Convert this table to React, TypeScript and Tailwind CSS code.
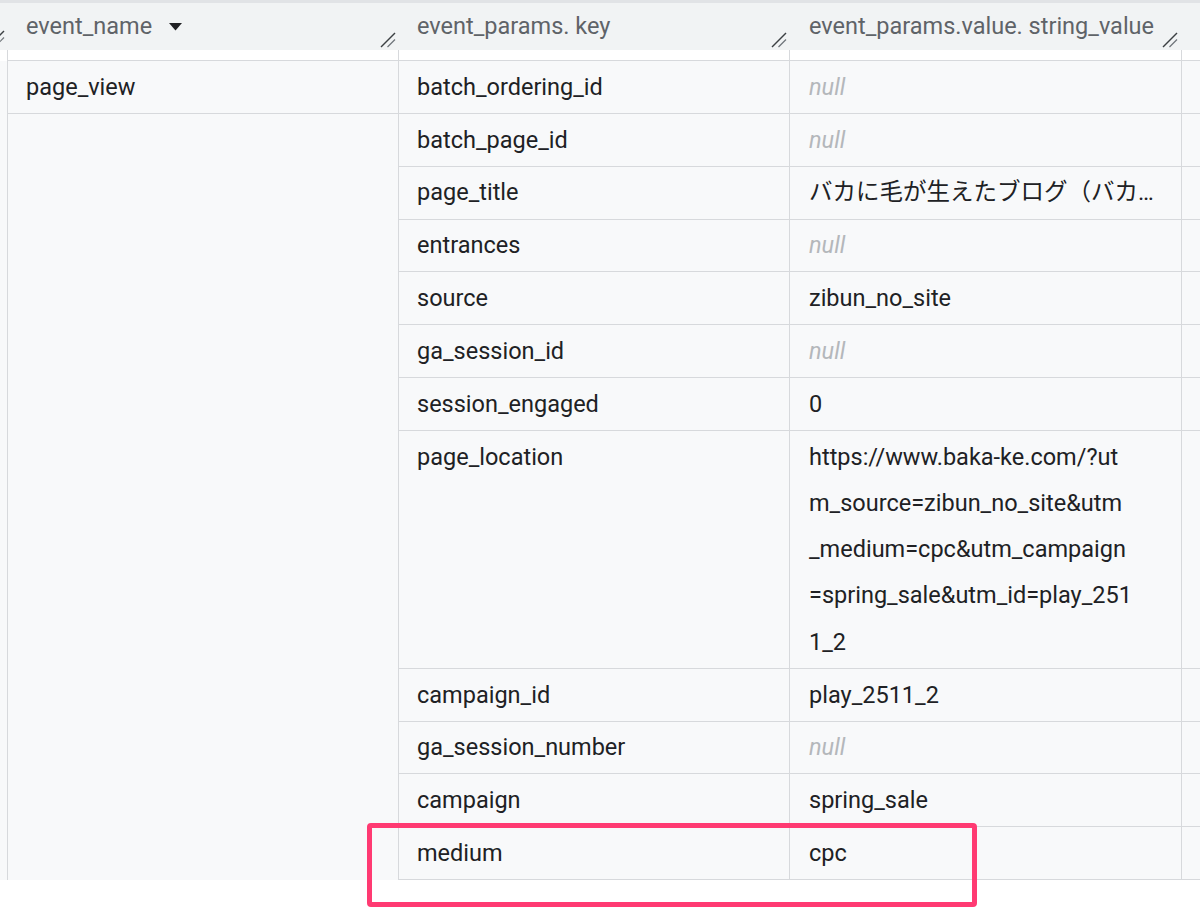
import React from "react";

type Row = { k: string; v?: string | null; lines?: string[]; truncate?: boolean };

const rows: Row[] = [
  { k: "batch_ordering_id", v: null },
  { k: "batch_page_id", v: null },
  { k: "page_title", v: "バカに毛が生えたブログ（バカ毛）", truncate: true },
  { k: "entrances", v: null },
  { k: "source", v: "zibun_no_site" },
  { k: "ga_session_id", v: null },
  { k: "session_engaged", v: "0" },
  {
    k: "page_location",
    lines: [
      "https://www.baka-ke.com/?ut",
      "m_source=zibun_no_site&utm",
      "_medium=cpc&utm_campaign",
      "=spring_sale&utm_id=play_251",
      "1_2",
    ],
  },
  { k: "campaign_id", v: "play_2511_2" },
  { k: "ga_session_number", v: null },
  { k: "campaign", v: "spring_sale" },
  { k: "medium", v: "cpc" },
];

function Grip({ className }: { className?: string }) {
  return (
    <svg className={className} width="16" height="16" viewBox="0 0 16 16" fill="none">
      <line x1="1" y1="15" x2="15" y2="1" stroke="#3c4043" strokeWidth="1.5" />
      <line x1="7.5" y1="15" x2="15" y2="7.5" stroke="#70757a" strokeWidth="1.2" />
    </svg>
  );
}

function Caret() {
  return (
    <svg width="13" height="8" viewBox="0 0 13 8" className="ml-[17px]">
      <path d="M0 0 L13 0 L6.5 7.5 Z" fill="#202124" />
    </svg>
  );
}

export default function App() {
  return (
    <div className="relative w-[1200px] h-[908px] overflow-hidden bg-white text-[#202124] font-[Roboto,'Noto_Sans_CJK_JP',sans-serif] text-[23.5px]">
      <div className="h-[3px] bg-[#e1e3e6]" />
      {/* header */}
      <div className="grid grid-cols-[8px_391px_391px_392px_1fr] h-[47px] bg-[#f1f3f4] text-[#5f6368]">
        <div className="relative">
          <Grip className="absolute right-[3px] bottom-[4px]" />
        </div>
        <div className="relative flex items-center pl-[18px]">
          <span>event_name</span>
          <Caret />
          <Grip className="absolute right-[3px] bottom-[2px]" />
        </div>
        <div className="relative flex items-center pl-[18px]">
          <span>event_params. key</span>
          <Grip className="absolute right-[3px] bottom-[2px]" />
        </div>
        <div className="relative flex items-center pl-[19px]">
          <span>event_params.value. string_value</span>
          <Grip className="absolute right-[4px] bottom-[2px]" />
        </div>
        <div />
      </div>
      {/* body */}
      <div className="grid grid-cols-[8px_391px_391px_392px_1fr]">
        <div className="h-[11px] border-r border-[#d7d9dc]" />
        <div className="h-[11px] border-r border-b border-[#d7d9dc]" />
        <div className="h-[11px] border-r border-b border-[#d7d9dc]" />
        <div className="h-[11px] border-r border-b border-[#d7d9dc]" />
        <div className="h-[11px] border-b border-[#d7d9dc]" />

        <div className="row-span-12 bg-[#f8f9fa] border-r border-[#d7d9dc]" />
        {rows.map((r, i) => (
          <React.Fragment key={r.k}>
            {i === 0 && (
              <div className="bg-[#f8f9fa] border-r border-b border-[#d7d9dc] px-[18px] py-[2.8px] leading-[46.25px]">
                page_view
              </div>
            )}
            {i === 1 && <div className="row-span-11 bg-[#f8f9fa] border-r border-[#d7d9dc]" />}
            <div className="bg-[#f8f9fa] border-r border-b border-[#d7d9dc] px-[18px] py-[2.8px] leading-[46.25px]">
              {r.k}
            </div>
            <div className="bg-[#f8f9fa] border-r border-b border-[#d7d9dc] pl-[19px] pr-[20px] py-[2.8px] leading-[46.25px] min-w-0">
              {r.lines ? (
                r.lines.map((l) => <div key={l}>{l}</div>)
              ) : r.v === null ? (
                <span className="italic text-[#b4b7bb]">null</span>
              ) : (
                <div className={r.truncate ? "truncate" : ""}>{r.v}</div>
              )}
            </div>
            <div className="bg-[#f8f9fa] border-b border-[#d7d9dc]" />
          </React.Fragment>
        ))}
      </div>
      <div className="absolute left-[367px] top-[823px] w-[610px] h-[84px] border-[5px] border-[#ff3a72] rounded-[4px]" />
    </div>
  );
}
